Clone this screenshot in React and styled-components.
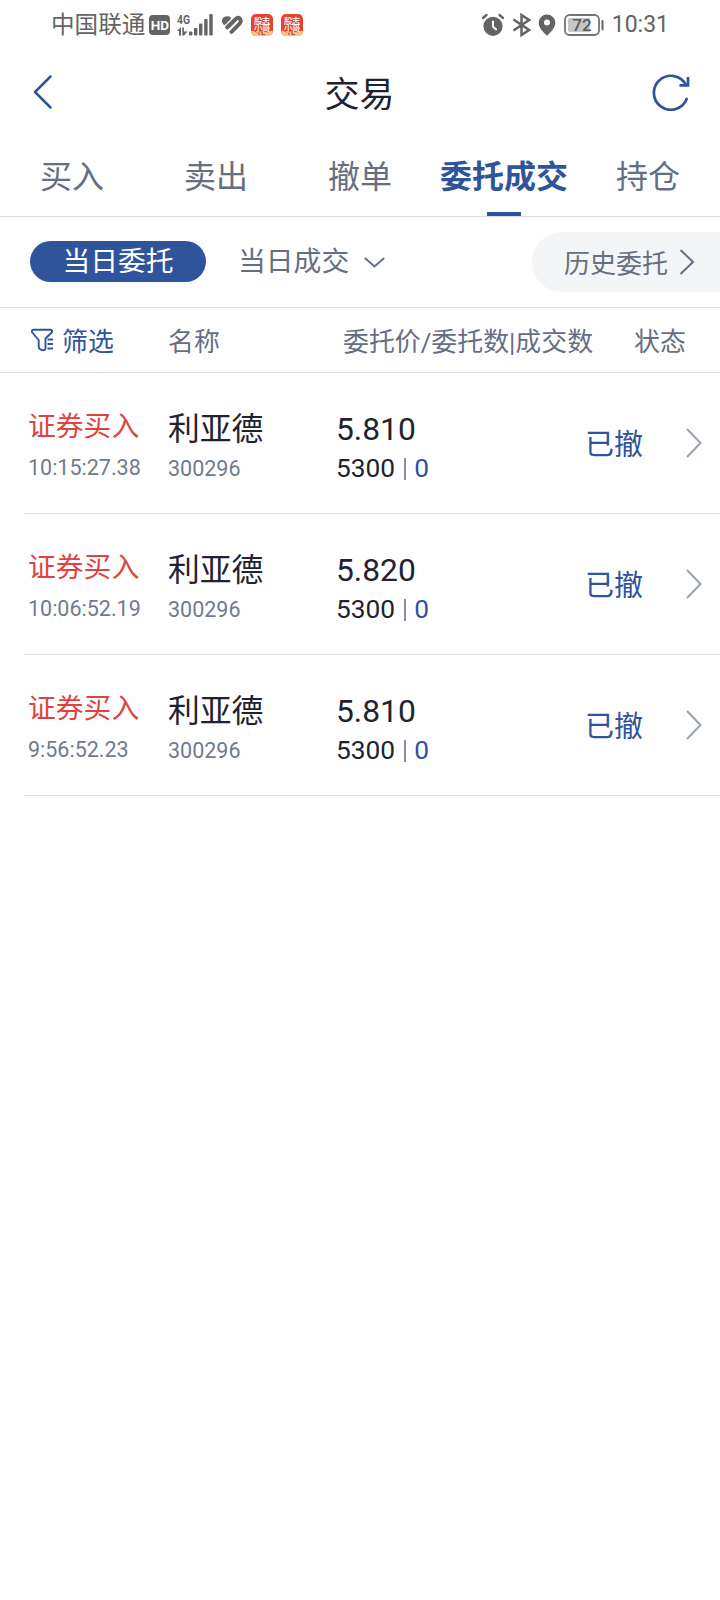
import styled, { createGlobalStyle } from 'styled-components';

const GlobalStyle = createGlobalStyle`
* { box-sizing: border-box; }
body {
  margin: 0;
  background: #fefefe;
  font-family: Roboto, "Noto Sans CJK SC", sans-serif;
}
`;

const Page = styled.div`
  display: flex;
  flex-direction: column;
  width: 720px;
  min-height: 1600px;
  background: #fefefe;
  color: #1f2330;
`;

const StatusBar = styled.div`
  display: flex;
  align-items: center;
  justify-content: space-between;
  height: 50px;
  padding: 0 51px 1px 51px;
  color: #646464;
`;
const StatusGroup = styled.div`
  display: flex;
  align-items: center;
`;
const Carrier = styled.span`
  font-size: 23.6px;
  line-height: 28px;
  padding-top: 1px;
  margin-right: 4px;
`;
const HdBadge = styled.span`
  width: 21px;
  height: 20px;
  border-radius: 4px;
  background: #646464;
  color: #fff;
  font-size: 13.5px;
  font-weight: 700;
  line-height: 21px;
  text-align: center;
  margin-right: 7px;
`;
const HealthSvg = styled.svg`
  margin-left: 6px;
`;
const AppIcon = styled.svg`
  margin-left: 8px;
`;
const StatusSvg = styled.svg`
  margin-left: 7px;
`;
const Clock = styled.span`
  font-size: 23px;
  line-height: 28px;
  padding-top: 1px;
  margin-left: 8px;
`;

const TitleBar = styled.header`
  display: grid;
  grid-template-columns: 38px 1fr 38px;
  align-items: center;
  height: 88px;
  padding: 0 30px 4px 33px;
  color: #30549b;
`;
const Title = styled.h1`
  margin: 0;
  padding: 8px 4px 0 0;
  font-size: 35px;
  font-weight: 400;
  line-height: 44px;
  text-align: center;
  color: #1f2330;
`;

const Tabs = styled.nav`
  display: grid;
  grid-template-columns: repeat(5, 1fr);
  height: 79px;
  border-bottom: 1px solid #dcdde0;
`;
const Tab = styled.div`
  display: flex;
  flex-direction: column;
  align-items: center;
  justify-content: space-between;
  padding-top: 17px;
  font-size: 32px;
  line-height: 44px;
  white-space: nowrap;
  color: ${(p) => (p.$active ? '#30549b' : '#666f82')};
  font-weight: ${(p) => (p.$active ? 700 : 400)};
`;
const Indicator = styled.i`
  width: 34px;
  height: 4px;
  background: #30549b;
`;

const SubTabs = styled.div`
  display: flex;
  align-items: center;
  height: 91px;
  padding-left: 30px;
  border-bottom: 1px solid #dcdde0;
  font-size: 27.8px;
  color: #666f82;
`;
const Pill = styled.div`
  width: 176px;
  height: 41px;
  margin-bottom: 1px;
  border-radius: 21px;
  background: #30549b;
  color: #fff;
  line-height: 41px;
  text-align: center;
`;
const SubTab = styled.div`
  display: flex;
  align-items: center;
  gap: 15px;
  margin-left: 32px;
  line-height: 40px;
`;
const History = styled.div`
  display: flex;
  align-items: center;
  gap: 11px;
  width: 188px;
  height: 60px;
  margin-left: auto;
  padding-left: 32px;
  border-radius: 30px 0 0 30px;
  background: #f3f5f7;
  font-size: 26px;
  line-height: 40px;
`;
const HistoryLabel = styled.span`
  padding-top: 3px;
`;

const TableHead = styled.div`
  display: grid;
  grid-template-columns: 138px 175px 291px 1fr;
  align-items: center;
  height: 65px;
  padding: 3px 0 0 30px;
  border-bottom: 1px solid #dcdde0;
  font-size: 25.9px;
  line-height: 40px;
  white-space: nowrap;
  color: #666f82;
`;
const Filter = styled.div`
  display: flex;
  align-items: center;
  gap: 8px;
  color: #30549b;
`;
const FilterSvg = styled.svg`
  margin-bottom: 3px;
`;

const Row = styled.div`
  display: grid;
  grid-template-columns: 144px 168px 249px 1fr 34px;
  height: 141px;
  margin-left: 24px;
  border-bottom: 1px solid #dcdde0;
`;
const Cell = styled.div`
  padding-left: ${(p) => p.$pad || 0}px;
  padding-top: ${(p) => p.$top || 34}px;
  white-space: nowrap;
`;
const Side = styled.div`
  font-size: 27.8px;
  line-height: 40px;
  color: #e0433f;
`;
const Name = styled.div`
  font-size: 31.8px;
  line-height: 44px;
`;
const Sub = styled.div`
  font-size: 21.5px;
  line-height: 26px;
  margin-top: ${(p) => p.$gap}px;
  color: #717b8c;
`;
const Price = styled.div`
  font-size: 31.8px;
  line-height: 40px;
`;
const Amount = styled.div`
  display: flex;
  align-items: center;
  font-size: 26.3px;
  line-height: 30px;
  margin-top: 4px;
`;
const Bar = styled.i`
  width: 2px;
  height: 22px;
  margin: 2px 8px 0 9px;
  background: #8790a1;
`;
const Filled = styled.span`
  color: #30549b;
`;
const State = styled.div`
  align-self: center;
  padding-top: 3px;
  font-size: 29px;
  line-height: 40px;
  color: #30549b;
`;
const RowArrow = styled.svg`
  align-self: center;
  color: #9aa2b1;
`;

const tabs = ['买入', '卖出', '撤单', '委托成交', '持仓'];

const orders = [
  { side: '证券买入', time: '10:15:27.38', name: '利亚德', code: '300296', price: '5.810', qty: 5300, filled: 0, state: '已撤' },
  { side: '证券买入', time: '10:06:52.19', name: '利亚德', code: '300296', price: '5.820', qty: 5300, filled: 0, state: '已撤' },
  { side: '证券买入', time: '9:56:52.23', name: '利亚德', code: '300296', price: '5.810', qty: 5300, filled: 0, state: '已撤' },
];

const SignalIcon = () => (
  <svg width="37" height="24" viewBox="0 0 37 24" fill="#646464">
    <text x="0" y="10.5" fontSize="12.5" fontWeight="700" textLength="13" lengthAdjust="spacingAndGlyphs">4G</text>
    <path d="M0 18 4 14V22.5H2V18zM5.3 14.5H7V18.5H10.500L7 22.5H5.3z" />
    <rect x="12" y="18.5" width="3.400" height="4" rx="1" />
    <rect x="17" y="15" width="3.400" height="7.5" rx="1" />
    <rect x="22" y="10.5" width="3.400" height="12" rx="1" />
    <rect x="27.2" y="6" width="3.400" height="16.5" rx="1" />
    <rect x="32.3" y="1" width="3.400" height="21.5" rx="1" />
  </svg>
);

// heart cut into slanted bands
const HealthIcon = () => (
  <HealthSvg width="23" height="20" viewBox="0 0 23 20" fill="none" stroke="#646464" strokeLinecap="round">
    <path d="M3.800 6.500Q3.500 3.200 7 3L9 3.200 4.500 8z" fill="#646464" strokeWidth="3.600" strokeLinejoin="round" />
    <path d="M7.300 12.300 15.300 4.500Q18 1.500 20 3.800Q21.500 6 19.600 8.500L11.500 16.800" strokeWidth="4" strokeLinejoin="round" />
    <path d="M10.300 14.300 17.800 6.800" stroke="#fefefe" strokeWidth="1.300" />
  </HealthSvg>
);

const BrokerIcon = () => (
  <AppIcon width="22" height="22" viewBox="0 0 22 22">
    <rect width="22" height="22" rx="5" fill="#e2452f" />
    <path d="M0 17Q3 16 5 18.500Q11 16.500 17 18.500Q19 16 22 17Q22 22 17 22H5Q0 22 0 17z" fill="#f6c389" />
    <path d="M8 18.5V21M11 18V20.5H14" stroke="#c04a2c" strokeWidth="1.2" fill="none" />
    <g fill="#fff" fontSize="8.5" fontWeight="500">
      <text x="3" y="9.5">股</text>
      <text x="10.8" y="9.5">志</text>
      <text x="3" y="16.8">小</text>
      <text x="10.8" y="16.8">哥</text>
    </g>
  </AppIcon>
);

const AlarmIcon = () => (
  <svg width="24" height="24" viewBox="0 0 24 24" fill="none" strokeLinecap="round">
    <circle cx="12" cy="13.3" r="9.6" fill="#646464" />
    <path d="M2 5 5.5 2M22 5 18.5 2" stroke="#646464" strokeWidth="2.4" />
    <path d="M12 8.5V13.8L15 16.3" stroke="#fff" strokeWidth="2" />
  </svg>
);

const BluetoothIcon = () => (
  <StatusSvg width="19" height="24" viewBox="0 0 19 24" fill="none" stroke="#646464" strokeWidth="2.5">
    <path d="M1.5 6.5 17 17 9.5 22V2L17 7 1.5 17.5" />
  </StatusSvg>
);

const PinIcon = () => (
  <StatusSvg width="18" height="22" viewBox="0 0 18 22">
    <path fillRule="evenodd" fill="#646464" d="M9 .5A8.3 8.3 0 0 0 .7 8.8C.7 14.5 6 18.5 9 21.8 12 18.5 17.3 14.5 17.3 8.8A8.3 8.3 0 0 0 9 .5zM9 5.6A3 3 0 1 1 9 11.6 3 3 0 0 1 9 5.6z" />
  </StatusSvg>
);

const BatteryIcon = () => (
  <StatusSvg width="41" height="22" viewBox="-1 0 41 22">
    <rect x="1" y="1" width="34" height="20" rx="4.5" fill="none" stroke="#747474" strokeWidth="1.8" />
    <path d="M6 4H26V18H6Q4 18 4 16V6Q4 4 6 4z" fill="#c6c6c6" />
    <rect x="37.5" y="6" width="2" height="10.5" rx="1" fill="#646464" />
    <text x="18" y="17" fontSize="17" fontWeight="500" textAnchor="middle" fill="#5a5a5a">72</text>
  </StatusSvg>
);

const BackIcon = () => (
  <svg width="20" height="34" viewBox="0 0 20 34" fill="none" stroke="currentColor" strokeWidth="2.5" strokeLinecap="round" strokeLinejoin="round">
    <path d="M17.5 1.5 2 17 17.5 32.5" />
  </svg>
);

const RefreshIcon = () => (
  <svg width="38" height="38" viewBox="0 0 38 38" fill="none" stroke="currentColor" strokeWidth="2.7">
    <path d="M34.700 26A17 17 0 1 1 34 12" strokeLinecap="round" />
    <path d="M36 4V12.300H27.500" />
  </svg>
);

const FilterIcon = () => (
  <FilterSvg width="24" height="24" viewBox="0 0 24 24" fill="none" stroke="currentColor" strokeWidth="1.9" strokeLinejoin="round" strokeLinecap="round">
    <path d="M8.700 12 2.300 4.500Q1 2 3.500 1.800H20.500Q23 2 21.700 4.500L15.500 10.500V20Q15.500 22.500 13 22.300Q8.700 21.500 8.700 18.500z" />
    <path d="M18.300 11.500H22.300M18.300 16H22.300M18.300 20.500H22.300" />
  </FilterSvg>
);

const DownIcon = () => (
  <svg width="21" height="11" viewBox="0 0 21 11" fill="none" stroke="currentColor" strokeWidth="2">
    <path d="M.8 1 10.5 9.5 20.2 1" />
  </svg>
);

const OrderRow = ({ order }) => (
  <Row>
    <Cell $pad={4}>
      <Side>{order.side}</Side>
      <Sub $gap={8}>{order.time}</Sub>
    </Cell>
    <Cell>
      <Name>{order.name}</Name>
      <Sub $gap={5}>{order.code}</Sub>
    </Cell>
    <Cell $top={36}>
      <Price>{order.price}</Price>
      <Amount>
        {order.qty}
        <Bar />
        <Filled>{order.filled}</Filled>
      </Amount>
    </Cell>
    <State>{order.state}</State>
    <RowArrow width="16" height="30" viewBox="0 0 16 30" fill="none" stroke="currentColor" strokeWidth="2">
      <path d="M1 1 14.5 15 1 29" />
    </RowArrow>
  </Row>
);

export default function App() {
  return (
    <Page>
      <GlobalStyle />
      <StatusBar>
        <StatusGroup>
          <Carrier>中国联通</Carrier>
          <HdBadge>HD</HdBadge>
          <SignalIcon />
          <HealthIcon />
          <BrokerIcon />
          <BrokerIcon />
        </StatusGroup>
        <StatusGroup>
          <AlarmIcon />
          <BluetoothIcon />
          <PinIcon />
          <BatteryIcon />
          <Clock>10:31</Clock>
        </StatusGroup>
      </StatusBar>
      <TitleBar>
        <BackIcon />
        <Title>交易</Title>
        <RefreshIcon />
      </TitleBar>
      <Tabs>
        {tabs.map((name) => (
          <Tab key={name} $active={name === '委托成交'}>
            {name}
            {name === '委托成交' && <Indicator />}
          </Tab>
        ))}
      </Tabs>
      <SubTabs>
        <Pill>当日委托</Pill>
        <SubTab>
          当日成交
          <DownIcon />
        </SubTab>
        <History>
          <HistoryLabel>历史委托</HistoryLabel>
          <svg width="16" height="26" viewBox="0 0 16 26" fill="none" stroke="currentColor" strokeWidth="2">
            <path d="M1.5 1 14 13 1.5 25" />
          </svg>
        </History>
      </SubTabs>
      <TableHead>
        <Filter>
          <FilterIcon />
          筛选
        </Filter>
        <span>名称</span>
        <span>委托价/委托数|成交数</span>
        <span>状态</span>
      </TableHead>
      {orders.map((order) => (
        <OrderRow key={order.time} order={order} />
      ))}
    </Page>
  );
}
